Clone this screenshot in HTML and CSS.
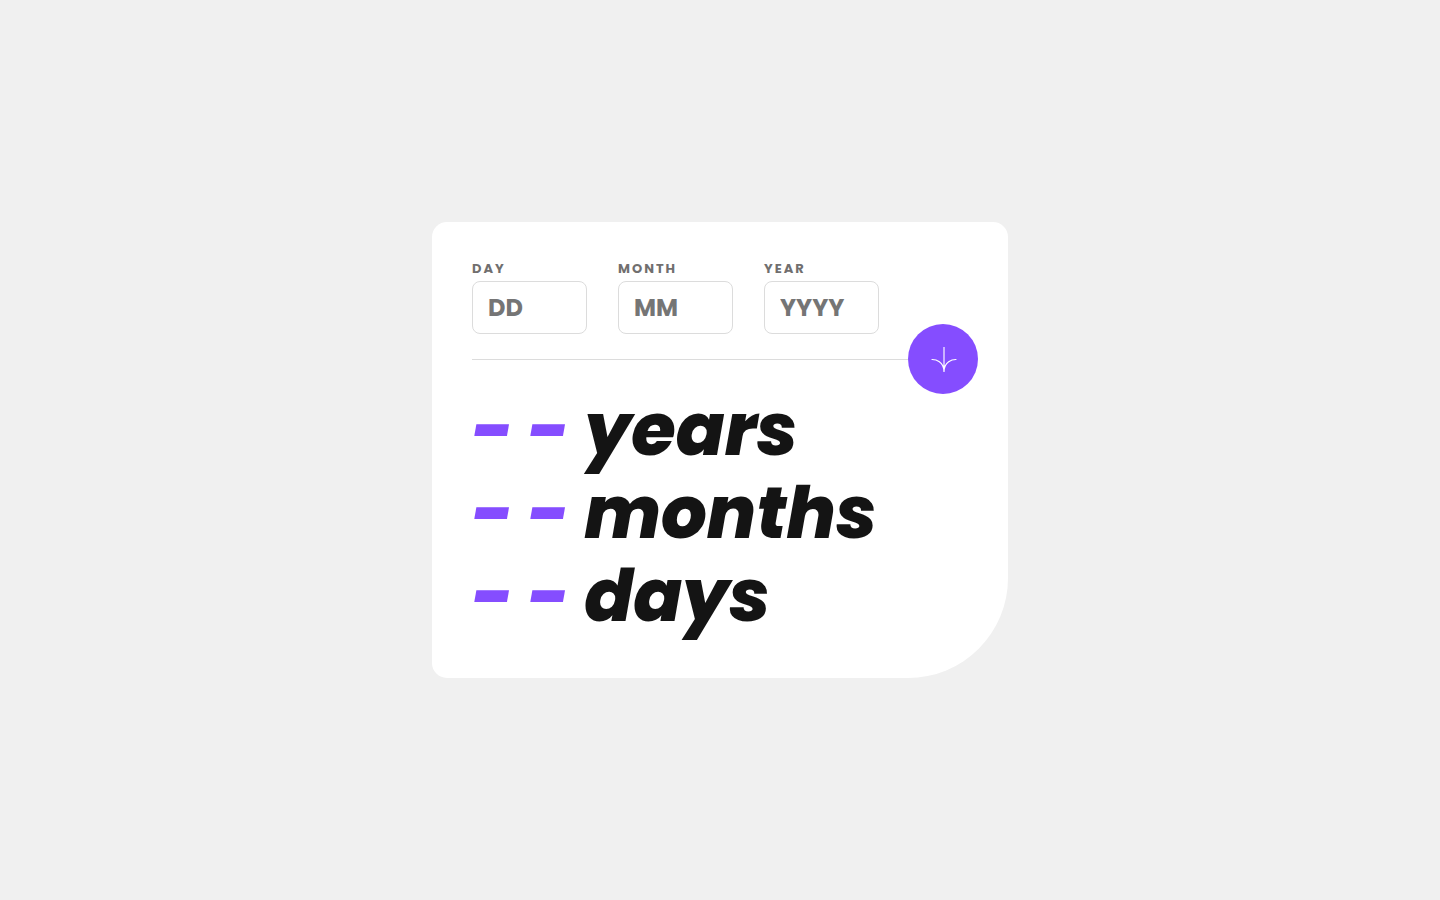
FILE: index.html
```html
<!DOCTYPE html>
<html lang="en">
<head>
<meta charset="utf-8">
<meta name="viewport" content="width=device-width, initial-scale=1">
<title>Age calculator</title>
<link rel="stylesheet" href="styles.css">
</head>
<body>
<main class="card">
  <form class="form">
    <div class="fields">
      <div class="field">
        <label class="label" for="day">DAY</label>
        <input class="input" id="day" type="text" inputmode="numeric" placeholder="DD">
      </div>
      <div class="field">
        <label class="label" for="month">MONTH</label>
        <input class="input" id="month" type="text" inputmode="numeric" placeholder="MM">
      </div>
      <div class="field">
        <label class="label" for="year">YEAR</label>
        <input class="input" id="year" type="text" inputmode="numeric" placeholder="YYYY">
      </div>
    </div>
    <div class="divider">
      <span class="line"></span>
      <button class="submit" type="submit" aria-label="Calculate age">
        <svg class="arrow" viewBox="0 0 46 44" aria-hidden="true"><path d="M1 22.019C8.333 21.686 23 25.616 23 44M23 44V0M45 22.019C37.667 21.686 23 25.616 23 44"/></svg>
      </button>
    </div>
  </form>
  <section class="results">
    <p class="result"><span class="value">- -</span> years</p>
    <p class="result"><span class="value">- -</span> months</p>
    <p class="result"><span class="value">- -</span> days</p>
  </section>
</main>
</body>
</html>
```
FILE: styles.css
```css
* {
  box-sizing: border-box;
  margin: 0;
}

body {
  display: flex;
  align-items: center;
  justify-content: center;
  min-height: 100vh;
  background: #f0f0f0;
  font-family: Poppins, Inter, sans-serif;
}

.card {
  width: 40%;
  min-width: 560px;
  padding: 40px;
  border-radius: 15px 15px 100px 15px;
  background: #fff;
}

.fields {
  display: flex;
  gap: 31px;
}

.field {
  display: flex;
  flex-direction: column;
  gap: 6px;
  width: 115px;
}

.label {
  color: #716f6f;
  font-size: 13px;
  font-weight: 700;
  line-height: 13px;
  letter-spacing: 2px;
}

.input {
  width: 100%;
  height: 53px;
  padding: 0 15px;
  border: 1px solid #dcdcdc;
  border-radius: 8px;
  background: #fff;
  color: #141414;
  font-family: inherit;
  font-size: 24px;
  font-weight: 700;
}

.input::placeholder {
  color: #757575;
  opacity: 1;
}

.divider {
  display: flex;
  align-items: center;
  height: 50px;
  margin-right: -10px;
}

.line {
  flex: 1;
  height: 1px;
  background: #dcdcdc;
}

.submit {
  display: flex;
  align-items: center;
  justify-content: center;
  flex: none;
  width: 70px;
  height: 70px;
  padding: 0;
  border: 0;
  border-radius: 50%;
  background: #854dff;
}

.arrow {
  width: 26px;
  height: 25px;
  margin-left: 2px;
  overflow: visible;
  fill: none;
  stroke: #fff;
  stroke-width: 2;
}

.results {
  padding: 4px 0 1px;
}

.result {
  color: #141414;
  font-size: 72px;
  font-style: italic;
  font-weight: 800;
  line-height: 83px;
  white-space: nowrap;
}

.value {
  color: #854dff;
}
```
